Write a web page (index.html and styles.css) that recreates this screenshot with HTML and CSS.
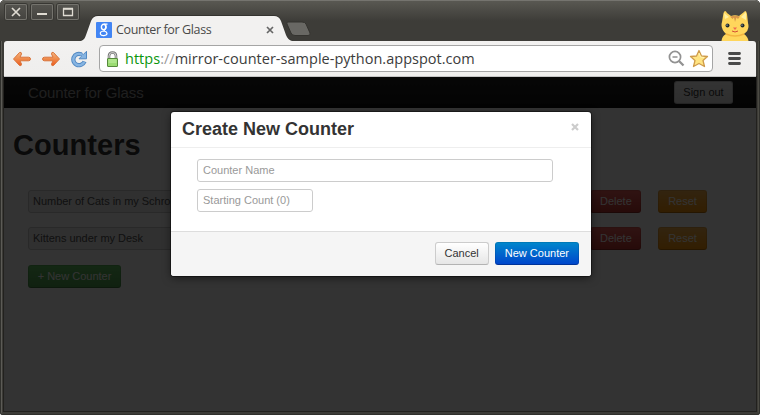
FILE: index.html
```html
<!DOCTYPE html>
<html lang="en">
<head>
<meta charset="utf-8">
<title>Counter for Glass</title>
<link rel="stylesheet" href="styles.css">
</head>
<body>
<div class="window">
  <header class="titlebar">
    <div class="controls">
      <span class="control"><svg width="22" height="16" viewBox="0 0 22 16"><path d="M7 4l8 8M15 4l-8 8" stroke="#dfdbd2" stroke-width="1.700" fill="none"/></svg></span>
      <span class="control"><svg width="22" height="16" viewBox="0 0 22 16"><path d="M6 10h10" stroke="#dfdbd2" stroke-width="2"/></svg></span>
      <span class="control"><svg width="22" height="16" viewBox="0 0 22 16"><path d="M6.500 5h9v6.500h-9z" stroke="#dfdbd2" stroke-width="1.300" fill="none"/><path d="M6 4.500h10" stroke="#dfdbd2" stroke-width="1.500"/></svg></span>
    </div>
    <div class="tab">
      <svg class="tab-shape" width="212" height="25" viewBox="0 0 212 25"><path d="M0 25C3 24 4 22 5 19L10 5Q12 0 17 0H193Q198 0 200 5L205 19Q207 24 211 25Z" fill="#f2f1f0"/></svg>
      <svg class="favicon" width="16" height="16" viewBox="0 0 16 16"><rect width="16" height="16" rx="1" fill="#4285f4"/><ellipse cx="7.600" cy="5" rx="2.200" ry="2.700" fill="none" stroke="#fff" stroke-width="1.400"/><path d="M8 2.200H11.500M9.600 3Q11 5.500 9 7.200Q7.200 8.500 9 9.300M8.500 9C4.200 9.200 4 11 4.500 12.200C5.300 14.200 11 14 11 11.500C11 10.200 10 9.600 8.500 9" fill="none" stroke="#fff" stroke-width="1.200"/></svg>
      <span class="tab-title">Counter for Glass</span>
      <svg class="tab-close" width="8" height="8" viewBox="0 0 8 8"><path d="M1 1l6 6M7 1L1 7" stroke="#666" stroke-width="1.700"/></svg>
    </div>
    <svg class="new-tab" width="27" height="16" viewBox="0 0 27 16"><path d="M3 1H17Q20 1 21 3L25 12Q26 14.500 23 14.500H10Q7 14.500 6 12L2 3Q1 1 3 1Z" fill="#696864" stroke="#34332f"/></svg>
    <svg class="avatar" width="30" height="31" viewBox="0 0 30 31">
      <path d="M1.500 31Q2 26 6 24Q0 18 2 12L3.500 3Q5 -1 7 3L11 6Q15 4.500 19 6L24 2Q26 -1 27 4L28 13Q30 20 24 24Q28 27 28.500 31Z" fill="#ffd65c"/>
      <path d="M4 3L5 9L9 7ZM26 2L21 7L26 10Z" fill="#fff0a0"/>
      <path d="M10 6.500L12.500 9L14 7.500L15 12L16.500 7.500L18 9L20 6.500Q15 5 10 6.500Z" fill="#d8974a"/>
      <path d="M6 24Q15 28 24 24" stroke="#f4b440" fill="none" stroke-width="1.500"/>
      <circle cx="7.500" cy="15.500" r="2" fill="#202b2d"/><circle cx="22.500" cy="15.500" r="2" fill="#202b2d"/>
      <circle cx="7" cy="15" r=".6" fill="#fff"/><circle cx="22" cy="15" r=".6" fill="#fff"/>
      <path d="M13 17.500H17L15 20Z" fill="#f06b50"/><path d="M12 21Q15 23 18 21" stroke="#d34c36" fill="none"/>
    </svg>
  </header>

  <div class="toolbar">
    <svg class="nav-icon" width="20" height="18" viewBox="0 0 20 18"><defs><linearGradient id="orange" x2="0" y2="1"><stop stop-color="#f6b582"/><stop offset=".5" stop-color="#ee8a4b"/><stop offset="1" stop-color="#f05a1e"/></linearGradient></defs><path d="M1.500 9L7.500 2.500Q9.500 1.500 9.500 4L8 7.200H16.500Q18.500 7.300 18.500 9Q18.500 10.700 16.500 10.800H8L9.500 14Q9.500 16.500 7.500 15.500Z" fill="url(#orange)" stroke="#d9753d"/></svg>
    <svg class="nav-icon" width="20" height="18" viewBox="0 0 20 18"><path d="M18.500 9L12.500 2.500Q10.500 1.500 10.500 4L12 7.200H3.500Q1.500 7.300 1.500 9Q1.500 10.700 3.500 10.800H12L10.500 14Q10.500 16.500 12.500 15.500Z" fill="url(#orange)" stroke="#d9753d"/></svg>
    <svg class="nav-icon" width="20" height="18" viewBox="0 0 20 18"><path d="M11.500 4.500Q8 2.700 5 5.400Q2 9 4.300 12.700Q7 16.200 11 14.800Q13.700 13.700 14.600 11.500" fill="none" stroke="#5389c2" stroke-width="4.200"/><path d="M11 2.800L13.300 4.500L16.500 1.300V8.800H9L11.500 6.200Z" fill="#86b4e2" stroke="#5389c2"/><path d="M12 4.800Q8 2.700 5 5.400Q2 9 4.300 12.700Q7 16.200 11 14.800Q13.400 13.800 14.300 12" fill="none" stroke="#86b4e2" stroke-width="2.400"/></svg>
    <div class="omnibox">
      <svg class="lock" width="13" height="16" viewBox="0 0 13 16"><path d="M3 8V5Q3 1.500 6.500 1.500Q10 1.500 10 5V8" fill="none" stroke="#777" stroke-width="2.600"/><path d="M3 8V5Q3 1.500 6.500 1.500Q10 1.500 10 5V8" fill="none" stroke="#ddd" stroke-width=".9"/><rect x="1.500" y="7.500" width="10" height="8" rx=".5" fill="#9bdc73" stroke="#568a3c"/><path d="M2.500 9h8M2.500 11h8" stroke="#c3f0a7"/></svg>
      <span class="url"><span class="secure">https</span><span class="slashes">://</span>mirror-counter-sample-python.appspot.com</span>
      <svg class="zoom-icon" width="17" height="17" viewBox="0 0 17 17"><circle cx="7" cy="7" r="5.600" fill="none" stroke="#929292" stroke-width="1.700"/><path d="M4.500 7h5" stroke="#929292" stroke-width="1.500"/><path d="M11 11l4.500 4.500" stroke="#929292" stroke-width="2.300"/></svg>
      <svg class="star" width="20" height="19" viewBox="0 0 20 19"><path d="M10 1.500L12.500 7L18.500 7.500L14 11.500L15.500 17.500L10 14.500L4.500 17.500L6 11.500L1.500 7.500L7.500 7Z" fill="#ffe482" stroke="#cf9c4c" stroke-width="1.300" stroke-linejoin="round"/><path d="M10 4L11.500 8L15 8.500" fill="none" stroke="#fff4b8"/></svg>
    </div>
    <svg class="menu-icon" width="13" height="13" viewBox="0 0 13 13"><path d="M1.500 1.500h10M1.500 6.500h10M1.500 11.500h10" stroke="#4a4a4a" stroke-width="2.800" stroke-linecap="round"/></svg>
  </div>

  <main class="viewport">
    <nav class="navbar"><span class="brand">Counter for Glass</span><button class="btn sign-out">Sign out</button></nav>
    <section class="content">
      <h1>Counters</h1>
      <div class="row"><div class="field name">Number of Cats in my Schro</div><button class="btn danger">Delete</button><button class="btn warning">Reset</button></div>
      <div class="row"><div class="field name">Kittens under my Desk</div><button class="btn danger">Delete</button><button class="btn warning">Reset</button></div>
      <button class="btn success">+ New Counter</button>
    </section>
    <div class="backdrop"></div>
    <div class="modal">
      <div class="modal-header"><h3>Create New Counter</h3><svg class="close" width="8" height="8" viewBox="0 0 8 8"><path d="M1 1l6 6M7 1L1 7" stroke="#ccc" stroke-width="2.200"/></svg></div>
      <div class="modal-body"><div class="field counter-name">Counter Name</div><div class="field starting">Starting Count (0)</div></div>
      <div class="modal-footer"><button class="btn">Cancel</button><button class="btn primary">New Counter</button></div>
    </div>
  </main>
</div>
</body>
</html>
```
FILE: styles.css
```css
* { box-sizing: border-box; }
body { margin: 0; background: #fff; font: 11px/15px "Liberation Sans", Arial, sans-serif; }
.window { width: 760px; height: 415px; padding: 0 4px 4px; overflow: hidden; border-radius: 5px 5px 3px 3px; background: #3c3b37; box-shadow: inset 0 0 0 1px #30302c, inset 2px 0 #5c5b56, inset -2px 0 #4b4a43; }
.titlebar { display: flex; height: 41px; margin: 0 -4px; padding: 0 4px; border-top: 1px solid #75746f; border-radius: 5px 5px 0 0; background: linear-gradient(#595852, #3d3c38 20px); }
.controls { display: flex; gap: 4px; padding: 3px 0 0 1px; width: 77px; }
.control { width: 22px; height: 16px; border-radius: 2px; background: linear-gradient(#55544f, #44433f); box-shadow: inset 0 0 0 1px #74736d, 0 0 0 1px #383733; }
.control svg, .tab svg { display: block; }
.tab { position: relative; display: flex; width: 210px; height: 25px; margin-top: 15px; padding: 6px 0 0 15px; }
.tab-shape { position: absolute; left: 0; top: 0; filter: drop-shadow(0 -1px 0 #34332f); }
.favicon { position: relative; flex: none; }
.tab-title { position: relative; width: 150px; margin: -1px 0 0 4px; font: 12.500px/17px "Open Sans", "Noto Sans", sans-serif; letter-spacing: -.38px; color: #494949; white-space: nowrap; }
.tab-close { position: relative; margin: 4px 0 0 0; }
.new-tab { margin: 20px 0 0 -6px; }
.avatar { margin: 9px 6px 0 auto; }
.toolbar { display: flex; align-items: center; height: 36px; padding: 0 14px 0 8px; background: linear-gradient(#f2f1f0, #efeeed); border-bottom: 1px solid #c5c5c5; border-radius: 3px 3px 0 0; }
.nav-icon { margin-right: 9px; flex: none; }
.omnibox { display: flex; align-items: center; flex: none; width: 614px; height: 27px; margin: 0 15px 0 0; padding: 0 3px 0 6px; background: #fff; border: 1px solid #a5a5a5; border-radius: 4px; }
.url { flex: 1; margin-left: 6px; font: 14.500px/22px "Open Sans", "Noto Sans", sans-serif; letter-spacing: .02px; color: #3c3c3c; white-space: nowrap; }
.secure { color: #0c960c; }
.slashes { color: #999; }
.zoom-icon { margin-right: 4px; }
.menu-icon { flex: none; }
.viewport { position: relative; height: 334px; overflow: hidden; background: #fff; box-shadow: 0 0 0 1px #22211e; }
.toolbar { position: relative; z-index: 1; }
.navbar { display: flex; align-items: center; justify-content: space-between; height: 31px; padding: 0 23px 0 24px; background: linear-gradient(#222, #111); }
.brand { font-size: 15px; line-height: 20px; letter-spacing: -.12px; color: #999; }
.btn { display: inline-block; height: 23px; margin: 0; padding: 0 9px; font: 11px/15px "Liberation Sans", Arial, sans-serif; color: #333; background: linear-gradient(#fff, #e6e6e6); border: 1px solid #ccc; border-bottom-color: #b3b3b3; border-radius: 3px; white-space: nowrap; }
.sign-out { width: 59px; padding: 0; }
.btn.danger, .btn.warning, .btn.success, .btn.primary { color: #fff; border-color: rgba(0,0,0,.1) rgba(0,0,0,.1) rgba(0,0,0,.25); }
.btn.danger { background: linear-gradient(#ee5f5b, #bd362f) border-box; }
.btn.warning { background: linear-gradient(#fbb450, #f89406) border-box; }
.btn.success { display: block; width: 93px; margin-top: 15px; padding: 0; background: linear-gradient(#62c462, #51a351) border-box; }
.btn.primary { background: linear-gradient(#08c, #04c) border-box; }
.content { padding: 22px 49px 0 24px; }
h1 { margin: 0 0 30px -15px; font-size: 29px; line-height: 30px; letter-spacing: .05px; color: #333; }
.row { display: flex; height: 23px; margin-bottom: 14px; }
.row .danger { width: 51px; margin-right: 17px; }
.row .warning { width: 49px; }
.field { height: 23px; padding: 3px 5px; color: #555; border: 1px solid #ccc; border-radius: 3px; white-space: nowrap; overflow: hidden; }
.name { flex: 1; margin-right: 17px; padding-left: 4px; letter-spacing: -.03px; background: #eee; }
.backdrop { position: absolute; inset: 0; background: rgba(0,0,0,.8); }
.modal { position: absolute; left: 167px; top: 35px; width: 420px; height: 164px; border-radius: 3px; overflow: hidden; background: #fff; box-shadow: 0 0 0 1px rgba(0,0,0,.4), 0 2px 8px rgba(0,0,0,.5); }
.modal-header { display: flex; justify-content: space-between; height: 36px; padding: 6px 12px 0 11px; border-bottom: 1px solid #eee; }
h3 { margin: 0; font-size: 18px; line-height: 22px; color: #333; }
.close { margin-top: 5px; }
.modal-body { display: grid; gap: 7px; align-content: start; height: 83px; padding: 11px 26px; }
.modal-body .field { color: #999; }
.counter-name { width: 356px; }
.starting { width: 116px; }
.modal-footer { display: flex; justify-content: flex-end; gap: 6px; height: 45px; padding: 10px 12px; background: #f5f5f5; border-top: 1px solid #ddd; }
```
